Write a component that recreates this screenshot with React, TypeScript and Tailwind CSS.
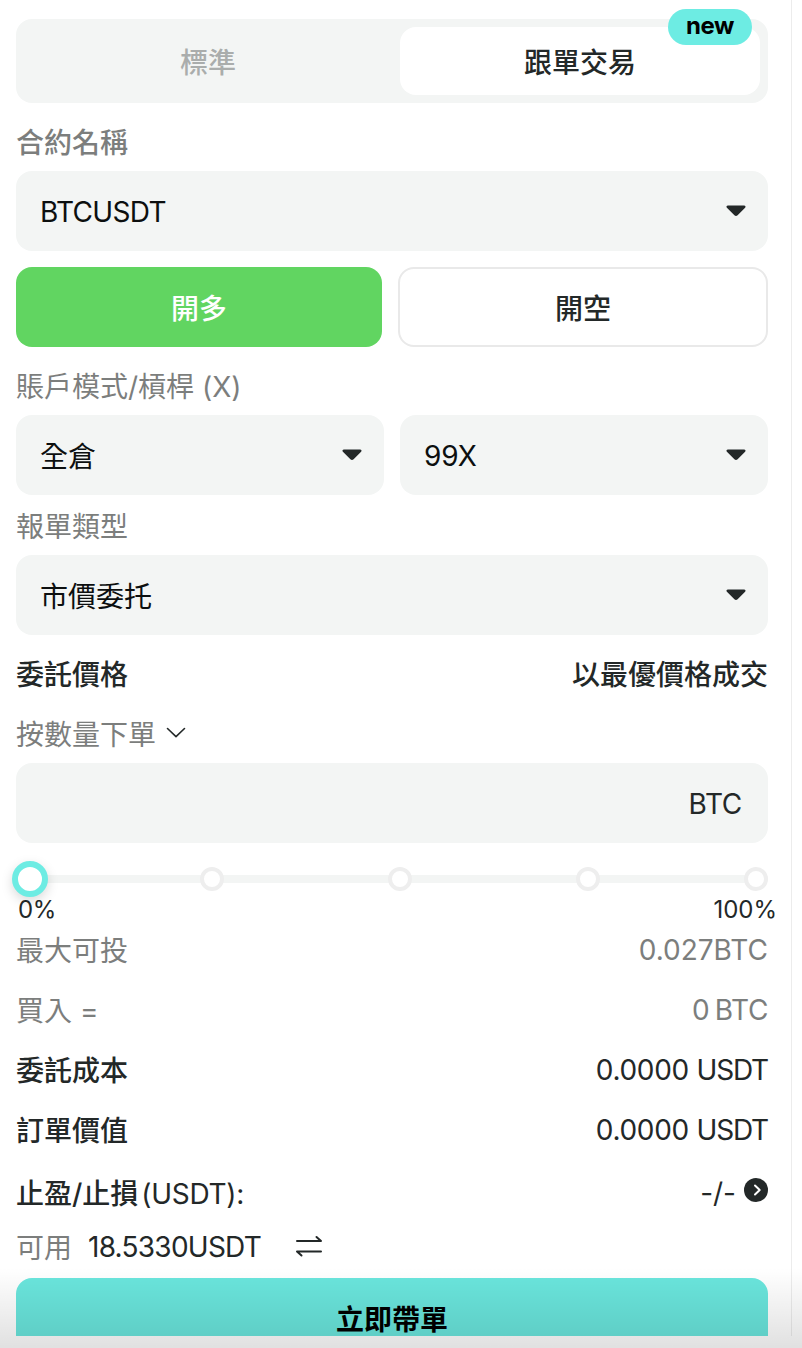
import type { ReactNode } from "react";

const Caret = () => (
  <svg width="20" height="12" viewBox="0 0 20 12" fill="#232828">
    <path d="M2 .6h16c1.500 0 2 1.200 1.100 2.100l-7.500 7.600c-.9.9-2.300.9-3.200 0L.9 2.700C0 1.800.5.6 2 .6z" />
  </svg>
);

function Select({ children, className = "pt-[3px]" }: { children: ReactNode; className?: string }) {
  return (
    <button className="flex h-20 w-full items-center justify-between rounded-2xl bg-[#f3f5f4] pr-[22px] pl-6 text-[#0c0f0f]">
      <span className={className}>{children}</span>
      <Caret />
    </button>
  );
}

function Row({ children, className = "" }: { children: ReactNode; className?: string }) {
  return <div className={`flex h-[60px] items-center justify-between ${className}`}>{children}</div>;
}

function Amount({ value, unit }: { value: string; unit: string }) {
  return (
    <span className="pb-0.5 tracking-[-0.3px]">
      {value} <span className="tracking-[-1.200px]">{unit}</span>
    </span>
  );
}

const stops = ["left-[184px]", "left-[372px]", "left-[560px]", "left-[728px]"];

export default function App() {
  return (
    <div className="relative h-[1348px] w-[802px] overflow-hidden bg-white font-['Inter','Noto_Sans_CJK_TC',sans-serif] text-[28px] leading-10 whitespace-nowrap text-[#232828]">
      <div className="h-[1336px] w-[792px] overflow-hidden border-r border-[#ececec] pt-[19px] pr-[23px] pl-4">
        <div className="relative flex h-[84px] rounded-2xl bg-[#f3f5f4] p-2 font-medium">
          <button className="flex-1 pt-1 pr-2 text-[#aaadac]">標準</button>
          <button className="w-[360px] rounded-2xl bg-white pt-1">跟單交易</button>
          <span className="absolute -top-2.5 right-4 flex h-9 w-[84px] items-center justify-center rounded-full bg-[#6decE3] pb-0.5 text-2xl font-bold tracking-[-0.4px] text-black">
            new
          </span>
        </div>

        <div className="flex h-[68px] items-center pt-[11px] font-medium text-[#7c7e7d]">合約名稱</div>
        <Select className="pt-px tracking-[-0.7px]">BTCUSDT</Select>

        <div className="mt-4 flex gap-4 font-medium">
          <button className="h-20 w-[366px] rounded-2xl bg-[#61d561] pt-1 text-white">開多</button>
          <button className="h-20 w-[370px] rounded-2xl border-2 border-[#e9e9e9] pt-1">開空</button>
        </div>

        <div className="flex h-[68px] items-center pt-[11px] text-[#7c7e7d]">賬戶模式/槓桿 (X)</div>
        <div className="grid grid-cols-2 gap-4">
          <Select>全倉</Select>
          <Select className="pt-px">99X</Select>
        </div>

        <div className="flex h-[60px] items-center pt-1 text-[#7c7e7d]">報單類型</div>
        <Select>市價委托</Select>

        <Row className="mt-2 pt-1 font-medium">
          <span>委託價格</span>
          <span>以最優價格成交</span>
        </Row>
        <Row className="text-[#7c7e7d]">
          <div className="flex items-center gap-2.5">
            <span className="pt-1">按數量下單</span>
            <svg width="20" height="12" viewBox="0 0 20 12" fill="none" stroke="#232828" strokeWidth="1.600" strokeLinecap="round" strokeLinejoin="round">
              <path d="M1.500 1.500 10 9.700l8.500-8.200" />
            </svg>
          </div>
        </Row>

        <div className="flex h-20 items-center justify-end rounded-2xl bg-[#f3f5f4] pt-px pr-[26px] tracking-[-0.3px]">BTC</div>

        <div className="relative mt-[18px] flex h-9 items-center">
          <div className="h-2 w-full rounded bg-[#f3f5f4]" />
          {stops.map((left) => (
            <span key={left} className={`absolute top-1.5 size-6 rounded-full border-4 border-[#eee] bg-white ${left}`} />
          ))}
          <span className="absolute top-0 -left-1 size-9 rounded-full border-[6px] border-[#6decE3] bg-white shadow-[0_4px_12px_rgba(0,0,0,0.15)]" />
        </div>
        <div className="-mr-[9px] flex h-6 items-center justify-between pt-px pl-0.5 text-2xl">
          <span className="tracking-[-0.4px]">0%</span>
          <span>100%</span>
        </div>

        <Row className="text-[#7c7e7d]">
          <span>最大可投</span>
          <span className="pb-0.5">0.027BTC</span>
        </Row>
        <Row className="text-[#7c7e7d]">
          <span>買入 =</span>
          <span className="pb-0.5 tracking-[-0.4px] [word-spacing:-2px]">0 BTC</span>
        </Row>
        <Row>
          <span className="font-medium">委託成本</span>
          <Amount value="0.0000" unit="USDT" />
        </Row>
        <Row>
          <span className="font-medium">訂單價值</span>
          <Amount value="0.0000" unit="USDT" />
        </Row>
        <Row className="pt-1.5">
          <span>
            <span className="font-medium">止盈/止損</span>
            <span className="ml-[3px] tracking-[-0.3px]">(USDT):</span>
          </span>
          <span className="flex items-center gap-2 pb-0.5">
            -/-
            <svg className="mb-[7px]" width="24" height="24" viewBox="0 0 24 24" fill="none">
              <circle cx="12" cy="12" r="12" fill="#232828" />
              <path d="m11 7.500 4.700 4.500-4.700 4.500" stroke="white" strokeWidth="2" strokeLinecap="round" strokeLinejoin="round" />
            </svg>
          </span>
        </Row>
        <div className="flex h-[57px] items-center pb-1">
          <span className="text-[#7c7e7d]">可用</span>
          <span className="ml-4 pb-0.5 tracking-[-0.75px]">18.5330USDT</span>
          <svg className="mb-1 ml-[34px]" width="28" height="24" viewBox="0 0 28 24" fill="none" stroke="#232828" strokeWidth="2" strokeLinecap="round" strokeLinejoin="round">
            <path d="M2 7h24l-4.500-4M26 17.500H2L6.500 21.500" />
          </svg>
        </div>
        <button className="flex h-20 w-full items-center justify-center rounded-2xl bg-[#6ae6dd] pt-1 font-bold text-black">立即帶單</button>
      </div>
      <div className="pointer-events-none absolute inset-x-0 bottom-0 h-[80px] bg-linear-to-b from-black/0 to-black/12" />
    </div>
  );
}
